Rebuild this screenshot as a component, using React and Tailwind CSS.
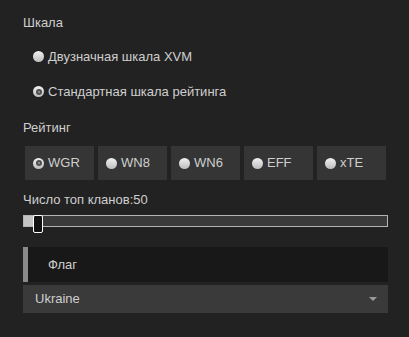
import { useState } from 'react'

function Radio({ checked }) {
  return (
    <span className="relative flex-shrink-0 w-[11px] h-[11px] rounded-full bg-gradient-to-b from-[#f2f2f2] to-[#bdbdbd] flex items-center justify-center">
      {checked && (
        <span className="w-[6px] h-[6px] rounded-full bg-[#505050] flex items-center justify-center">
          <span className="w-[2px] h-[2px] rounded-full bg-[#9a9a9a]" />
        </span>
      )}
    </span>
  )
}

const ratings = ['WGR', 'WN8', 'WN6', 'EFF', 'xTE']

export default function App() {
  const [scale, setScale] = useState(1)
  const [rating, setRating] = useState('WGR')
  const top = 50

  return (
    <div className="w-[409px] h-[337px] overflow-hidden bg-[#222222] text-[#cfcfcf] text-[13px] font-['Liberation_Sans',Arial,sans-serif] pl-[23px] pt-[15px]">
      <div className="w-[365px]">
        <div className="h-[15px] leading-[15px]">Шкала</div>

        <div className="mt-[19px] flex flex-col gap-[20px] pl-[10px]">
          {['Двузначная шкала XVM', 'Стандартная шкала рейтинга'].map((t, i) => (
            <div key={t} className="h-[15px] leading-[15px] flex items-center gap-[4px] cursor-pointer" onClick={() => setScale(i)}>
              <Radio checked={scale === i} />
              <span>{t}</span>
            </div>
          ))}
        </div>

        <div className="mt-[21px] h-[15px] leading-[15px]">Рейтинг</div>

        <div className="mt-[11px] ml-[2px] flex gap-[4px]">
          {ratings.map(r => (
            <div
              key={r}
              onClick={() => setRating(r)}
              className="w-[69px] h-[34px] bg-[#353535] flex items-center gap-[4px] pl-[8px] cursor-pointer"
            >
              <Radio checked={rating === r} />
              <span>{r}</span>
            </div>
          ))}
        </div>

        <div className="mt-[12px] h-[15px] leading-[15px]">Число топ кланов:{top}</div>

        <div className="relative mt-[8px] h-[18px]">
          <div className="mt-[3px] h-[12px] border border-[#b4b4b4] bg-[#3a3a3a] flex">
            <div className="w-[10px] h-full bg-[#c4c4c4]" />
          </div>
          <div className="absolute left-[10px] top-0 w-[10px] h-[18px] rounded-[2px] bg-[#111] border border-white" />
        </div>

        <div className="mt-[14px] h-[35px] bg-[#181818] border-l-[5px] border-[#8a8a8a] pl-[20px] flex items-center">
          Флаг
        </div>

        <div className="mt-[3px] h-[28px] bg-[#3a3a3a] pl-[12px] pr-[11px] flex items-center justify-between">
          <span>Ukraine</span>
          <span className="w-0 h-0 border-l-[4px] border-r-[4px] border-t-[4px] border-l-transparent border-r-transparent border-t-[#9a9a9a]" />
        </div>
      </div>
    </div>
  )
}
